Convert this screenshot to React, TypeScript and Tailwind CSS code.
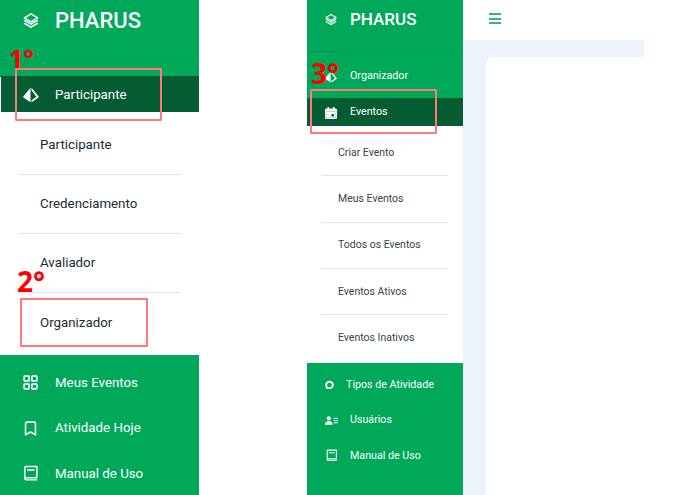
import { Bookmark, LayoutGrid } from "lucide-react";
import type { ReactNode } from "react";

function LayersIcon({ className }: { className: string }) {
  return (
    <svg viewBox="0 0 24 24" fill="none" stroke="currentColor" strokeWidth="2.400" strokeLinejoin="round" strokeLinecap="round" className={className}>
      <path d="M12 2 22 8l-10 6L2 8z" />
      <path d="m2.500 12 9.500 5.500 9.500-5.500" />
      <path d="m2.500 16.500 9.500 5.500 9.500-5.500" />
    </svg>
  );
}

function DiamondIcon({ className }: { className: string }) {
  return (
    <svg viewBox="0 0 24 24" className={className} fill="currentColor">
      <path d="M11.200 1 .8 13.800a1.500 1.500 0 0 0 .4 2.200L11.200 23z" />
      <path d="M12.800 1 23.200 13.800a1.500 1.500 0 0 1-.4 2.200L12.800 23V19.800L20.200 14.600 12.800 5.200z" />
    </svg>
  );
}

function CalendarIcon({ className }: { className: string }) {
  return (
    <svg viewBox="0 0 24 24" className={className} fill="currentColor">
      <path d="M5 0h3v3h8V0h3v3h2a3 3 0 0 1 3 3v15a3 3 0 0 1-3 3H3a3 3 0 0 1-3-3V6a3 3 0 0 1 3-3h2zM2.500 9v12.500h19V9z" />
      <path d="M2.500 9h19v12.500h-19zM13 14v5h5v-5z" fillRule="evenodd" />
    </svg>
  );
}

function ManualIcon({ className }: { className: string }) {
  return (
    <svg viewBox="0 0 24 24" fill="none" stroke="currentColor" strokeWidth="2" strokeLinecap="round" strokeLinejoin="round" className={className}>
      <path d="M4 19V3.500A1.500 1.500 0 0 1 5.500 2H21v16H5.500A1.500 1.500 0 0 0 4 19.500 1.500 1.500 0 0 0 5.500 21H21" />
      <path d="M8 7h9" />
    </svg>
  );
}

function BubbleIcon({ className }: { className: string }) {
  return (
    <svg viewBox="0 0 24 24" className={className} fill="none" stroke="currentColor" strokeWidth="5">
      <path d="M5.500 20C3.500 18 3 15.500 3 13a9 8.500 0 1 1 9 8.500H3" />
    </svg>
  );
}

function UsersListIcon({ className }: { className: string }) {
  return (
    <svg viewBox="0 0 24 16" className={className} fill="currentColor">
      <circle cx="7" cy="4" r="3.800" />
      <path d="M0 16c0-5 3-7 7-7s7 2 7 7z" />
      <path d="M16 3h8v1.800h-8zM16 7.200h8v1.800h-8zM16 11.400h8v1.800h-8z" />
    </svg>
  );
}

function LeftBottomRow({ icon, label }: { icon: ReactNode; label: string }) {
  return (
    <div className="flex h-[45.5px] items-center text-[13.3px] text-white">
      <span className="ml-[22px] flex w-[33px]">{icon}</span>
      {label}
    </div>
  );
}

function RightBottomRow({ icon, label, width = "w-[25px]" }: { icon: ReactNode; label: string; width?: string }) {
  return (
    <div className="flex h-[35.5px] items-center text-[10.7px] text-white">
      <span className={`ml-[18px] flex ${width}`}>{icon}</span>
      {label}
    </div>
  );
}

// red marks drawn over the screenshot
function Mark({ className }: { className: string }) {
  return <div className={`absolute rounded-[1px] border-2 border-[#ff7b7b] ${className}`} />;
}

function Step({ className, children }: { className: string; children: ReactNode }) {
  return <div className={`absolute font-['Open_Sans',sans-serif] font-bold leading-none text-[#ff0000] ${className}`}>{children}</div>;
}

const leftSub = ["Participante", "Credenciamento", "Avaliador", "Organizador"];
const rightSub = ["Criar Evento", "Meus Eventos", "Todos os Eventos", "Eventos Ativos", "Eventos Inativos"];

export default function App() {
  return (
    <div className="relative flex h-[495px] w-[699px] overflow-hidden bg-white font-['Roboto',sans-serif]">
      {/* first sidebar */}
      <aside className="flex h-full w-[199px] shrink-0 flex-col bg-white">
        <div className="h-[76px] shrink-0 bg-[#00a859]">
          <div className="flex h-[61px] items-start border-b border-[#0b9a55] pt-[6px] text-white">
            <LayersIcon className="ml-[23px] mt-[6px] h-[17px] w-[16px]" />
            <span className="ml-[16px] text-[22px] font-medium leading-[30px]">PHARUS</span>
          </div>
        </div>
        <div className="flex h-[36px] shrink-0 items-center bg-[#055c33] pt-[1px] text-[13.3px] text-white">
          <div className="h-full w-[1px] bg-white" />
          <DiamondIcon className="ml-[22px] h-[16px] w-[16px]" />
          <span className="ml-[16px]">Participante</span>
        </div>
        <ul className="ml-[18px] mr-[18.5px] h-[243px] shrink-0 pt-[4px]">
          {leftSub.map((s, i) => (
            <li
              key={s}
              className={`flex h-[59px] items-center pl-[22px] text-[13.3px] text-[#212a36] ${i < 3 ? "border-b border-[#e3e6e8]" : ""}`}
            >
              {s}
            </li>
          ))}
        </ul>
        <div className="min-h-0 flex-1 bg-[#00a859] pt-[5px]">
          <LeftBottomRow icon={<LayoutGrid size={17} strokeWidth={2.2} />} label="Meus Eventos" />
          <LeftBottomRow icon={<Bookmark size={17} strokeWidth={2.2} />} label="Atividade Hoje" />
          <LeftBottomRow icon={<ManualIcon className="h-[17px] w-[17px]" />} label="Manual de Uso" />
        </div>
      </aside>

      <div className="w-[108px] shrink-0" />

      {/* second sidebar */}
      <aside className="flex h-full w-[156px] shrink-0 flex-col bg-white">
        <div className="h-[98px] shrink-0 bg-[#00a859]">
          <div className="flex h-[52px] items-start border-b border-[#0b9a55] pt-[8px] text-white">
            <LayersIcon className="ml-[18px] mt-[5px] h-[13px] w-[12px]" />
            <span className="ml-[13px] text-[17px] font-medium leading-[22px]">PHARUS</span>
          </div>
          <div className="flex h-[46px] items-center pt-[3px] text-[10.7px] text-white">
            <DiamondIcon className="ml-[18px] h-[12px] w-[12px]" />
            <span className="ml-[13px]">Organizador</span>
          </div>
        </div>
        <div className="flex h-[28px] shrink-0 items-center bg-[#055c33] pt-[1px] text-[10.7px] text-white">
          <CalendarIcon className="ml-[18px] h-[12px] w-[12px]" />
          <span className="ml-[13px]">Eventos</span>
        </div>
        <ul className="ml-[14px] mr-[15px] h-[237px] shrink-0 pt-[4px]">
          {rightSub.map((s, i) => (
            <li
              key={s}
              className={`flex h-[46.3px] items-center pl-[17px] text-[10.5px] text-[#3a424c] ${i < 4 ? "border-b border-[#e3e6e8]" : ""}`}
            >
              {s}
            </li>
          ))}
        </ul>
        <div className="min-h-0 flex-1 bg-[#00a859] pt-[4px]">
          <RightBottomRow icon={<BubbleIcon className="h-[9px] w-[9px]" />} label="Tipos de Atividade" width="w-[21px]" />
          <RightBottomRow icon={<UsersListIcon className="h-[9px] w-[13px]" />} label="Usuários" />
          <RightBottomRow icon={<ManualIcon className="h-[13px] w-[13px]" />} label="Manual de Uso" />
        </div>
      </aside>

      {/* page area */}
      <div className="flex h-full w-[181px] shrink-0 flex-col">
        <div className="flex h-[40px] items-start bg-white pl-[26px] pt-[13px]">
          <div className="flex h-[11px] w-[12px] flex-col justify-between">
            <div className="h-[2px] bg-[#3cb37a]" />
            <div className="h-[2px] bg-[#3cb37a]" />
            <div className="h-[2px] bg-[#3cb37a]" />
          </div>
        </div>
        <div className="flex-1 bg-[#ecf3fb] pl-[23px] pt-[17px]">
          <div className="h-full rounded-tl-[7px] bg-white" />
        </div>
      </div>

      {/* annotations */}
      <Mark className="left-[15px] top-[68px] h-[53px] w-[147px]" />
      <Mark className="left-[20px] top-[298px] h-[49px] w-[128px]" />
      <Mark className="left-[310px] top-[89px] h-[45px] w-[127px]" />
      <Step className="left-[9px] top-[46px] text-[25px]">1°</Step>
      <Step className="left-[17px] top-[267px] text-[28px]">2°</Step>
      <Step className="left-[311px] top-[59px] text-[28px]">3°</Step>
    </div>
  );
}
